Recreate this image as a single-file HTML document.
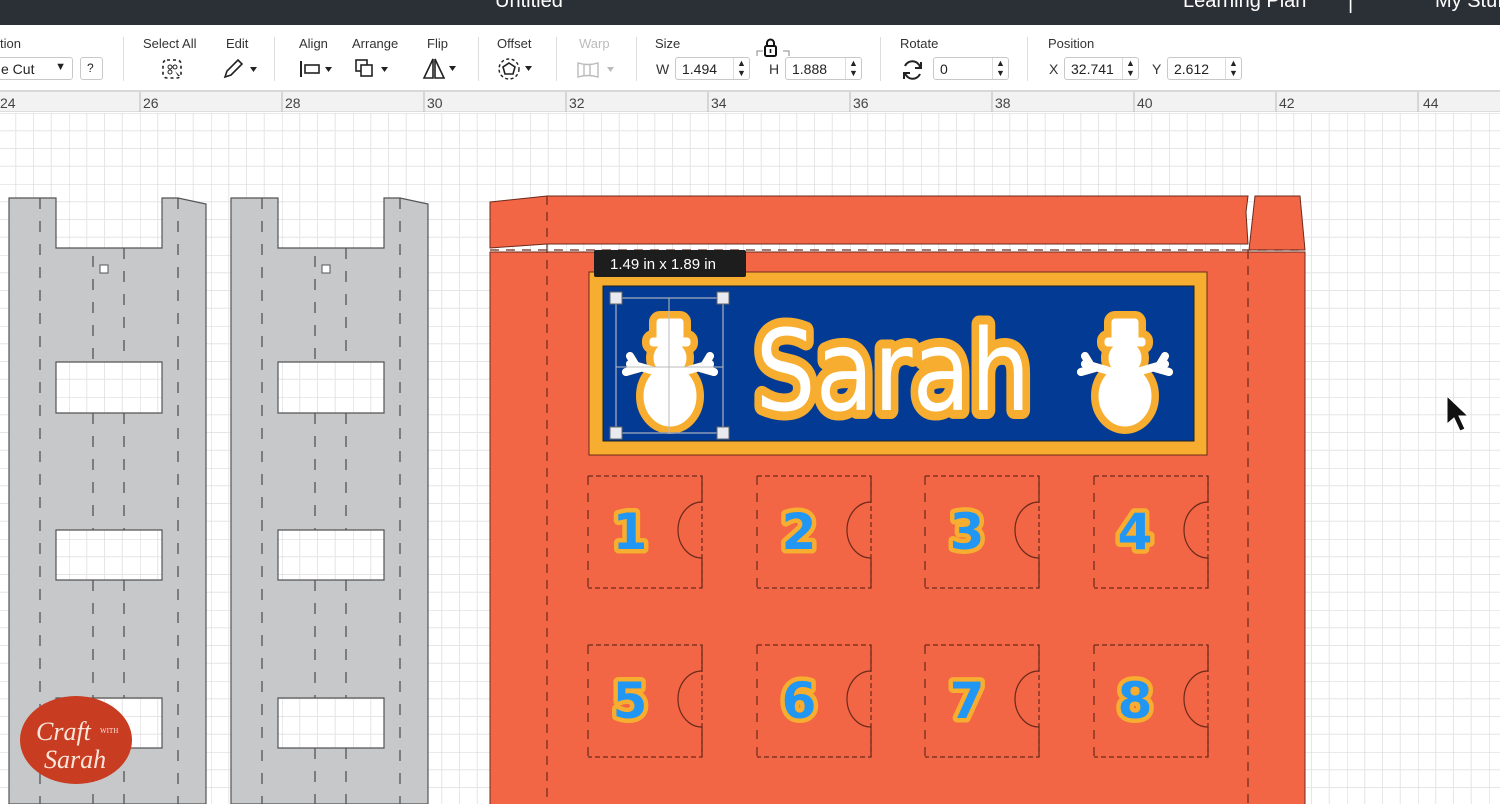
<!DOCTYPE html>
<html><head><meta charset="utf-8"><style>
*{margin:0;padding:0;box-sizing:border-box}
body{width:1500px;height:804px;overflow:hidden;background:#fff;font-family:"Liberation Sans",sans-serif;position:relative}
.top{position:absolute;left:0;top:0;width:1500px;height:25px;background:#2b2f36;color:#fff;font-size:20px;white-space:nowrap;overflow:hidden}
.tb{position:absolute;left:0;top:25px;width:1500px;height:67px;background:#fff;border-bottom:2px solid #d8d8d8}
.lab{position:absolute;top:11px;font-size:13px;color:#333}
.box{position:absolute;top:32px;height:23px;border:1px solid #c8c8c8;border-radius:3px;font-size:14px;color:#222;padding:3px 6px;background:#fff}
.sep{position:absolute;top:12px;width:1px;height:44px;background:#ddd}
.ic{position:absolute;top:33px;font-size:15px;color:#222}
.ruler{position:absolute;left:0;top:92px;width:1500px;height:20px;background:#f2f2f2;border-bottom:1px solid #ddd}
.rl{position:absolute;top:3px;font-size:14px;color:#444}
</style></head><body>
<div class="top"><span style="position:absolute;left:495px;top:-10px">Untitled</span><span style="position:absolute;left:1183px;top:-10px">Learning Plan</span><span style="position:absolute;left:1348px;top:-8px">|</span><span style="position:absolute;left:1435px;top:-10px">My Stuff</span></div>
<div class="tb">
<div class="lab" style="left:0">tion</div>
<div class="box" style="left:-6px;width:79px">e Cut <span style="position:absolute;right:6px;font-size:11px">▼</span></div>
<div class="box" style="left:80px;width:23px;font-size:12px;padding:3px 6px">?</div>
<div class="sep" style="left:123px"></div>
<div class="lab" style="left:143px">Select All</div>
<svg class="ic" style="left:160px;top:32px" width="26" height="26"><rect x="3" y="3" width="18" height="18" rx="4" fill="none" stroke="#222" stroke-width="1.6" stroke-dasharray="3 3"/><circle cx="10" cy="10" r="2" fill="none" stroke="#222"/><circle cx="15" cy="10" r="2" fill="none" stroke="#222"/><circle cx="10" cy="15" r="2" fill="none" stroke="#222"/><path d="M15 14 l5 5 l-2 0 z" fill="#222"/></svg>
<div class="lab" style="left:226px">Edit</div>
<svg class="ic" style="left:222px;top:33px" width="40" height="22"><path d="M3 19 L5 13 L16 2 L20 6 L9 17 Z" fill="none" stroke="#222" stroke-width="1.6"/><path d="M28 9 h7 l-3.5 5z" fill="#222"/></svg>
<div class="sep" style="left:274px"></div>
<div class="lab" style="left:299px">Align</div>
<svg class="ic" style="left:300px;top:34px" width="36" height="20"><path d="M1 2 v16" stroke="#222" stroke-width="2"/><rect x="5" y="6" width="14" height="8" fill="none" stroke="#222" stroke-width="1.6"/><path d="M25 8 h7 l-3.5 5z" fill="#222"/></svg>
<div class="lab" style="left:352px">Arrange</div>
<svg class="ic" style="left:354px;top:33px" width="38" height="22"><rect x="2" y="2" width="11" height="11" fill="none" stroke="#222" stroke-width="1.6"/><rect x="7" y="7" width="11" height="11" fill="#fff" stroke="#222" stroke-width="1.6"/><path d="M27 9 h7 l-3.5 5z" fill="#222"/></svg>
<div class="lab" style="left:427px">Flip</div>
<svg class="ic" style="left:422px;top:32px" width="38" height="24"><path d="M11 2 L2 21 H11 Z M13 2 L22 21 H13 Z" fill="none" stroke="#222" stroke-width="1.6"/><path d="M27 9 h7 l-3.5 5z" fill="#222"/></svg>
<div class="sep" style="left:478px"></div>
<div class="lab" style="left:497px">Offset</div>
<svg class="ic" style="left:497px;top:32px" width="40" height="24"><circle cx="12" cy="12" r="10" fill="none" stroke="#222" stroke-width="1.4" stroke-dasharray="3 2.5"/><path d="M12 6 L18 10 L16 17 H8 L6 10 Z" fill="none" stroke="#222" stroke-width="1.6"/><path d="M28 9 h7 l-3.5 5z" fill="#222"/></svg>
<div class="sep" style="left:556px"></div>
<div class="lab" style="left:579px;color:#bbb">Warp</div>
<svg class="ic" style="left:576px;top:35px" width="44" height="20"><path d="M2 3 Q12 6 22 3 V17 Q12 14 2 17 Z M8 5 V15 M14 5 V15" fill="none" stroke="#bbb" stroke-width="1.4"/><path d="M31 7 h7 l-3.5 5z" fill="#bbb"/></svg>
<div class="sep" style="left:636px"></div>
<div class="lab" style="left:655px">Size</div>
<div class="lab" style="left:656px;top:36px;font-size:14px">W</div>
<div class="box" style="left:675px;width:75px">1.494<span style="position:absolute;right:0;top:0;width:16px;height:21px;border-left:1px solid #ddd;font-size:9px;line-height:10px;text-align:center">▲<br>▼</span></div>
<svg style="position:absolute;left:755px;top:13px" width="36" height="20"><path d="M2 18 V13 H8 M34 18 V13 H28" fill="none" stroke="#888" stroke-width="1"/><rect x="10" y="8" width="11" height="10" rx="1.5" fill="none" stroke="#111" stroke-width="2"/><path d="M12 8 V5 a3.5 3.5 0 0 1 7 0 V8" fill="none" stroke="#111" stroke-width="2"/><rect x="14.7" y="11" width="1.6" height="4" fill="#111"/></svg>
<div class="lab" style="left:769px;top:36px;font-size:14px">H</div>
<div class="box" style="left:785px;width:77px">1.888<span style="position:absolute;right:0;top:0;width:16px;height:21px;border-left:1px solid #ddd;font-size:9px;line-height:10px;text-align:center">▲<br>▼</span></div>
<div class="sep" style="left:880px"></div>
<div class="lab" style="left:900px">Rotate</div>
<svg style="position:absolute;left:901px;top:33px" width="24" height="24"><path d="M19 9 A8 8 0 0 0 4 8 M4 15 A8 8 0 0 0 19 16" fill="none" stroke="#222" stroke-width="2"/><path d="M20 4 V10 H14" fill="none" stroke="#222" stroke-width="2"/><path d="M3 21 V15 H9" fill="none" stroke="#222" stroke-width="2"/></svg>
<div class="box" style="left:933px;width:76px">0<span style="position:absolute;right:0;top:0;width:16px;height:21px;border-left:1px solid #ddd;font-size:9px;line-height:10px;text-align:center">▲<br>▼</span></div>
<div class="sep" style="left:1027px"></div>
<div class="lab" style="left:1048px">Position</div>
<div class="lab" style="left:1049px;top:36px;font-size:14px">X</div>
<div class="box" style="left:1064px;width:75px">32.741<span style="position:absolute;right:0;top:0;width:16px;height:21px;border-left:1px solid #ddd;font-size:9px;line-height:10px;text-align:center">▲<br>▼</span></div>
<div class="lab" style="left:1152px;top:36px;font-size:14px">Y</div>
<div class="box" style="left:1167px;width:75px">2.612<span style="position:absolute;right:0;top:0;width:16px;height:21px;border-left:1px solid #ddd;font-size:9px;line-height:10px;text-align:center">▲<br>▼</span></div>
</div>
<div class="ruler">
<svg style="position:absolute;left:0;top:0" width="1500" height="20"><g stroke="#bbb" stroke-width="1">
<path d="M-2 0V20M140 0V20M282 0V20M424 0V20M566 0V20M708 0V20M850 0V20M992 0V20M1134 0V20M1276 0V20M1418 0V20"/>
</g></svg>
<span class="rl" style="left:0">24</span><span class="rl" style="left:143px">26</span><span class="rl" style="left:285px">28</span><span class="rl" style="left:427px">30</span><span class="rl" style="left:569px">32</span><span class="rl" style="left:711px">34</span><span class="rl" style="left:853px">36</span><span class="rl" style="left:995px">38</span><span class="rl" style="left:1137px">40</span><span class="rl" style="left:1279px">42</span><span class="rl" style="left:1423px">44</span>
</div>
<svg style="position:absolute;left:0;top:113px" width="1500" height="691" viewBox="0 113 1500 691">
<defs>
<pattern id="g" x="-2" y="113" width="71" height="71" patternUnits="userSpaceOnUse">
<path d="M17.75 0V71M35.5 0V71M53.25 0V71M0 17.75H71M0 35.5H71M0 53.25H71" stroke="#e6e6e6" stroke-width="1"/>
<path d="M0 0V71M0 0H71" stroke="#d6d6d6" stroke-width="1"/>
</pattern>
<g id="strip">
<path d="M9 198 H56 V248 H162 V198 H178 L206 204 V804 H9 Z M56 362 V413 H162 V362 Z M56 530 V580 H162 V530 Z M56 698 V748 H162 V698 Z" fill="#c7c8ca" fill-rule="evenodd" stroke="#555" stroke-width="1.2"/>
<rect x="100" y="265" width="8" height="8" fill="#fff" stroke="#555"/>
<path d="M40 198V804 M178 198V804" stroke="#555" stroke-width="1.3" stroke-dasharray="11 12"/>
<path d="M93 256V362 M124 248V362 M93 413V530 M124 413V530 M93 580V698 M124 580V698 M93 748V804 M124 748V804" stroke="#555" stroke-width="1.3" stroke-dasharray="11 12"/>
</g>
<g id="sm">
<rect x="-13" y="-55" width="26" height="24" rx="3"/>
<rect x="-20" y="-36" width="40" height="8" rx="3"/>
<circle cx="0" cy="-16" r="16"/>
<ellipse cx="0" cy="22" rx="26" ry="30"/>
<path d="M-12 -2 L-40 -10 M-34 -8 L-40 -18 M-30 -6 L-44 -2 M12 -2 L40 -10 M34 -8 L40 -18 M30 -6 L44 -2" stroke-width="8" stroke-linecap="round"/>
</g>
</defs>
<rect x="0" y="113" width="1500" height="691" fill="url(#g)"/>
<use href="#strip"/>
<use href="#strip" x="222"/>
<path d="M490 202 L547 196 H1248 L1246 212 L1248 244 H547 L490 248 Z" fill="#f26545" stroke="#6b2a1b" stroke-width="1"/>
<path d="M1255 196 H1300 L1305 250 H1249 Z" fill="#f26545" stroke="#6b2a1b" stroke-width="1"/>
<rect x="490" y="252" width="815" height="560" fill="#f26545" stroke="#6b2a1b" stroke-width="1"/>
<path d="M490 250 H1305 M547 196 V804 M1248 250 V804" stroke="#6b2a1b" stroke-width="1.2" stroke-dasharray="9 7"/>
<rect x="589" y="272" width="618" height="183" fill="#f7ad2f" stroke="#6b2a1b"/>
<rect x="603" y="286" width="591" height="155" fill="#033b94" stroke="#222"/>
<g transform="translate(670,374)"><use href="#sm" fill="#f7ad2f" stroke="#f7ad2f" stroke-width="16" stroke-linejoin="round"/></g>
<g transform="translate(670,374)"><use href="#sm" fill="#fff" stroke="#fff"/></g>
<g transform="translate(1125,374)"><use href="#sm" fill="#f7ad2f" stroke="#f7ad2f" stroke-width="16" stroke-linejoin="round"/></g>
<g transform="translate(1125,374)"><use href="#sm" fill="#fff" stroke="#fff"/></g>
<text x="893" y="410" text-anchor="middle" font-family="'DejaVu Sans',sans-serif" font-size="112" fill="#fff" stroke="#f7ad2f" stroke-width="18" stroke-linejoin="round" paint-order="stroke" textLength="275" lengthAdjust="spacingAndGlyphs">Sarah</text>
<rect x="616" y="298" width="107" height="135" fill="none" stroke="#8a9ab8" stroke-width="1.5"/>
<path d="M669 298V433 M616 367H723" stroke="#bbb" stroke-width="1"/>
<g fill="#e8eaf0" stroke="#666"><rect x="610" y="292" width="12" height="12"/><rect x="717" y="292" width="12" height="12"/><rect x="610" y="427" width="12" height="12"/><rect x="717" y="427" width="12" height="12"/></g>
<rect x="594" y="250" width="152" height="27" rx="2" fill="#1d1d1d"/>
<text x="610" y="269" font-family="'Liberation Sans',sans-serif" font-size="15" fill="#fff">1.49  in x 1.89  in</text>
<g stroke="#6b2a1b" stroke-width="1.2" fill="none">
<g id="d1"><path d="M588 476 H702 V588 H588" stroke-dasharray="5 3"/><path d="M588 476 V588" stroke-dasharray="9 8"/><path d="M702 476 V502 M702 558 V588"/><path d="M702 502 A24 28 0 0 0 702 558"/></g>
<use href="#d1" x="169"/><use href="#d1" x="337"/><use href="#d1" x="506"/>
<use href="#d1" y="169"/><use href="#d1" x="169" y="169"/><use href="#d1" x="337" y="169"/><use href="#d1" x="506" y="169"/>
</g>
<g font-family="'DejaVu Sans',sans-serif" font-weight="bold" font-size="50" fill="#2196f3" stroke="#f7ad2f" stroke-width="9" stroke-linejoin="round" paint-order="stroke" text-anchor="middle">
<text x="630" y="549">1</text><text x="799" y="549">2</text><text x="967" y="549">3</text><text x="1135" y="549">4</text>
<text x="630" y="718">5</text><text x="799" y="718">6</text><text x="967" y="718">7</text><text x="1135" y="718">8</text>
</g>
<path d="M1447 396 L1447 424 L1454 418 L1460 431 L1465 429 L1459 416 L1468 416 Z" fill="#111" stroke="#fff" stroke-width="1"/>
<ellipse cx="76" cy="740" rx="56" ry="44" fill="#c83c22"/>
<text x="36" y="740" font-family="'Liberation Serif',serif" font-style="italic" font-size="26" fill="#fbe6dc">Craft</text>
<text x="100" y="733" font-family="'Liberation Serif',serif" font-size="7" fill="#fbe6dc">WITH</text>
<text x="44" y="768" font-family="'Liberation Serif',serif" font-style="italic" font-size="26" fill="#fbe6dc">Sarah</text>
</svg>
</body></html>
